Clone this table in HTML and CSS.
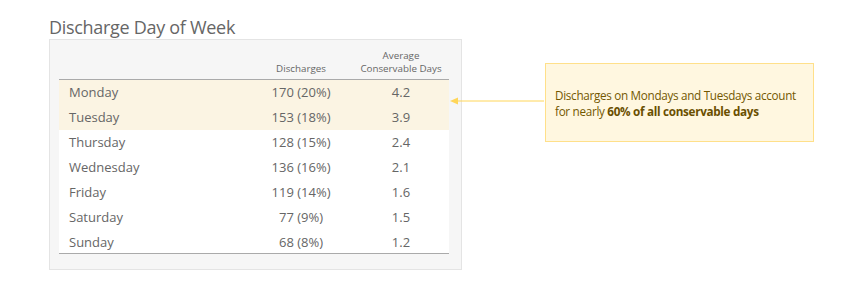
FILE: index.html
```html
<!DOCTYPE html>
<html>
<head>
<meta charset="utf-8">
<link rel="stylesheet" href="styles.css">
</head>
<body>
<div class="page">
  <div class="left">
    <h1 class="title">Discharge Day of Week</h1>
    <div class="panel">
      <div class="table">
        <div class="row head">
          <div class="c1"></div>
          <div class="c2">Discharges</div>
          <div class="c3">Average<br>Conservable Days</div>
        </div>
        <div class="row hl"><div class="c1">Monday</div><div class="c2">170 (20%)</div><div class="c3">4.2</div></div>
        <div class="row hl"><div class="c1">Tuesday</div><div class="c2">153 (18%)</div><div class="c3">3.9</div></div>
        <div class="row"><div class="c1">Thursday</div><div class="c2">128 (15%)</div><div class="c3">2.4</div></div>
        <div class="row"><div class="c1">Wednesday</div><div class="c2">136 (16%)</div><div class="c3">2.1</div></div>
        <div class="row"><div class="c1">Friday</div><div class="c2">119 (14%)</div><div class="c3">1.6</div></div>
        <div class="row"><div class="c1">Saturday</div><div class="c2">77 (9%)</div><div class="c3">1.5</div></div>
        <div class="row last"><div class="c1">Sunday</div><div class="c2">68 (8%)</div><div class="c3">1.2</div></div>
      </div>
      <div class="pointer">
        <svg width="94" height="8" viewBox="0 0 94 8"><path d="M0 4 L8 0.5 L8 7.5 Z" fill="#ffd659"/><line x1="6" y1="4" x2="94" y2="4" stroke="#ffd659" stroke-width="1"/></svg>
      </div>
    </div>
  </div>
  <div class="callout">Discharges on Mondays and Tuesdays account<br>for nearly <b>60% of all conservable days</b></div>
</div>
</body>
</html>
```
FILE: styles.css
```css
html, body { margin: 0; padding: 0; background: #fff; }
body { font-family: "Open Sans", "Noto Sans", sans-serif; color: #666; }
.page { display: flex; align-items: flex-start; padding: 16px 0 0 49px; }
.left { width: 413px; }
.title { margin: 0; font-size: 18px; font-weight: 400; color: #666; line-height: 23px; letter-spacing: -0.3px; }
.panel { position: relative; box-sizing: border-box; height: 231px; background: #f6f6f6; border: 1px solid #e4e4e4; padding: 0 12px 0 9px; }
.table { background: #fff; }
.row { display: grid; grid-template-columns: 1fr 104px 96px; height: 25px; align-items: center; font-size: 13px; line-height: 18px; padding-bottom: 1px; box-sizing: border-box; }
.row .c1 { padding-left: 10px; }
.row .c2, .row .c3 { text-align: center; }
.head { background: #f6f6f6; align-items: end; font-size: 9.8px; line-height: 13px; padding-bottom: 4px; border-bottom: 1px solid #aaa; height: 40px; }
.hl { background: #fbf4e3; }
.last { border-bottom: 1px solid #aaa; height: 24px; padding-bottom: 0; }
.pointer { position: absolute; left: 400px; top: 57px; width: 94px; height: 8px; line-height: 0; }
.callout { box-sizing: border-box; margin-left: 83px; margin-top: 47px; width: 269px; height: 79px; background: #fff7e0; border: 1px solid #ffe08a; padding: 23px 0 0 9px; font-size: 11.7px; line-height: 16px; color: #735800; letter-spacing: -0.3px; white-space: nowrap; }
.callout b { font-weight: 700; color: #6a4f00; }
```
